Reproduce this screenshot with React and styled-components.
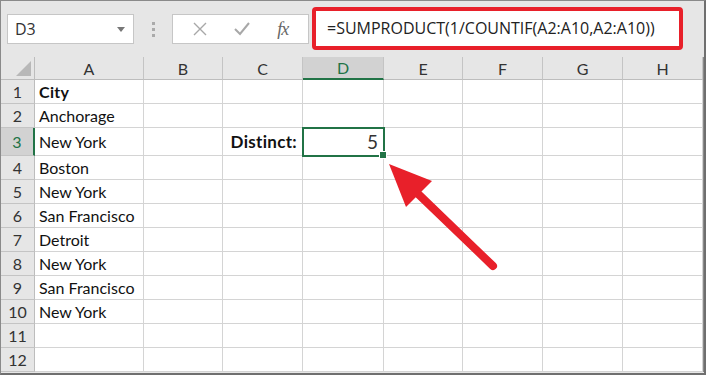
import React from "react";
import styled, { createGlobalStyle, css } from "styled-components";

const GlobalStyle = createGlobalStyle`
  html, body {
    margin: 0;
    padding: 0;
    background: #ffffff;
  }
  * {
    box-sizing: border-box;
  }
`;

const GREEN = "#217346";
const RED = "#e8202a";

const COLS = ["A", "B", "C", "D", "E", "F", "G", "H"];
const COL_WIDTHS = [34, 109, 79, 80, 81, 79, 80, 80, 80];
const ROW_HEIGHTS = [23, 24, 24, 28, 24, 24, 24, 24, 24, 24, 24, 24, 24];

const cities = [
  "Anchorage",
  "New York",
  "Boston",
  "New York",
  "San Francisco",
  "Detroit",
  "New York",
  "San Francisco",
  "New York",
];

const Frame = styled.div`
  position: relative;
  width: 706px;
  height: 375px;
  overflow: hidden;
  background: #e6e6e6;
  border: 1px solid #8a8a8a;
  border-right: 2px solid #6f6f6f;
  border-bottom: 2px solid #6f6f6f;
  font-family: Lato, "Open Sans", sans-serif;
`;

const FormulaBar = styled.div`
  height: 56px;
  display: flex;
  align-items: center;
  padding-left: 6px;
`;

const NameBox = styled.div`
  width: 127px;
  height: 30px;
  background: #fff;
  border: 1px solid #c6c6c6;
  display: flex;
  align-items: center;
  justify-content: space-between;
  padding: 0 8px 0 7px;
  font-family: "Open Sans", sans-serif;
  font-size: 16px;
  color: #333;
`;

const Caret = styled.span`
  width: 0;
  height: 0;
  border-left: 4px solid transparent;
  border-right: 4px solid transparent;
  border-top: 5px solid #777;
`;

const Grip = styled.div`
  width: 38px;
  display: flex;
  flex-direction: column;
  align-items: center;
  gap: 3px;

  span {
    width: 3px;
    height: 3px;
    background: #aaa;
  }
`;

const FnBox = styled.div`
  width: 137px;
  height: 30px;
  background: #fff;
  border: 1px solid #c6c6c6;
  display: flex;
  align-items: center;
  justify-content: space-around;
  padding: 0 6px;
`;

const Fx = styled.span`
  font-family: "Liberation Serif", serif;
  font-style: italic;
  font-size: 18px;
  color: #666;
  letter-spacing: -1px;
`;

const FormulaInput = styled.div`
  margin-left: 3px;
  margin-top: -2px;
  width: 371px;
  height: 43px;
  background: #fff;
  border: 4px solid ${RED};
  border-radius: 4px;
  display: flex;
  align-items: center;
  padding-left: 11px;
  font-family: "Open Sans", sans-serif;
  font-size: 16px;
  color: #222;
  white-space: nowrap;
`;

const Sheet = styled.div`
  display: grid;
  grid-template-columns: ${COL_WIDTHS.map((w) => `${w}px`).join(" ")} 1fr;
  grid-template-rows: ${ROW_HEIGHTS.map((h) => `${h}px`).join(" ")};
  background: #fff;
`;

const headerBase = css`
  background: #e6e6e6;
  color: #333;
  display: flex;
  align-items: center;
  justify-content: center;
  font-size: 16px;
`;

const Corner = styled.div`
  ${headerBase};
  position: relative;
  border-right: 1px solid #bdbdbd;
  border-bottom: 1px solid #bdbdbd;

  &::after {
    content: "";
    position: absolute;
    right: 3px;
    bottom: 3px;
    border-left: 15px solid transparent;
    border-bottom: 15px solid #b8b8b8;
  }
`;

const ColHead = styled.div`
  ${headerBase};
  border-right: 1px solid #c4c4c4;
  border-bottom: 1px solid #bdbdbd;
  ${(p) =>
    p.$active &&
    css`
      background: #d2d2d2;
      color: ${GREEN};
      border-bottom: 2px solid ${GREEN};
    `}
`;

const RowHead = styled.div`
  ${headerBase};
  border-right: 1px solid #bdbdbd;
  border-bottom: 1px solid #c4c4c4;
  ${(p) =>
    p.$active &&
    css`
      background: #d2d2d2;
      color: ${GREEN};
      border-right: 2px solid ${GREEN};
    `}
`;

const Filler = styled.div`
  background: #e6e6e6;
  border-left: 1px solid #8a8a8a;
`;

const Cell = styled.div`
  position: relative;
  border-right: 1px solid #d4d4d4;
  border-bottom: 1px solid #d4d4d4;
  display: flex;
  align-items: center;
  justify-content: ${(p) => (p.$right ? "flex-end" : "flex-start")};
  padding: 0 5px 0 4px;
  font-size: 16px;
  font-weight: ${(p) => (p.$bold ? 700 : 400)};
  letter-spacing: ${(p) => (p.$bold ? "0.3px" : "0")};
  color: #111;
  white-space: nowrap;
  ${(p) =>
    p.$large &&
    css`
      font-size: 17px;
    `}
  ${(p) =>
    p.$selected &&
    css`
      outline: 2px solid ${GREEN};
      outline-offset: -1px;
      z-index: 2;
      font-size: 19px;
      color: #333;
      padding-right: 5px;

      &::after {
        content: "";
        position: absolute;
        right: -4px;
        bottom: -4px;
        width: 6px;
        height: 6px;
        background: ${GREEN};
        border: 1px solid #fff;
      }
    `}
`;

const Arrow = styled.svg`
  position: absolute;
  left: 0;
  top: 0;
  pointer-events: none;
  z-index: 5;
`;

function cellContent(row, col) {
  if (col === 0) {
    if (row === 1) return { text: "City", bold: true };
    if (row >= 2 && row <= 10) return { text: cities[row - 2] };
  }
  if (row === 3 && col === 2)
    return { text: "Distinct:", bold: true, right: true, large: true };
  if (row === 3 && col === 3) return { text: "5", right: true, selected: true };
  return { text: "" };
}

export default function App() {
  const rows = ROW_HEIGHTS.length - 1;
  return (
    <>
      <GlobalStyle />
      <Frame>
        <FormulaBar>
          <NameBox>
            D3
            <Caret />
          </NameBox>
          <Grip>
            <span />
            <span />
            <span />
          </Grip>
          <FnBox>
            <svg width="14" height="14" viewBox="0 0 14 14">
              <path d="M1 1 L13 13 M13 1 L1 13" stroke="#a8a8a8" strokeWidth="1.4" fill="none" />
            </svg>
            <svg width="16" height="14" viewBox="0 0 16 14">
              <path d="M1 7 L6 12 L15 1" stroke="#a8a8a8" strokeWidth="2" fill="none" />
            </svg>
            <Fx>fx</Fx>
          </FnBox>
          <FormulaInput>=SUMPRODUCT(1/COUNTIF(A2:A10,A2:A10))</FormulaInput>
        </FormulaBar>
        <Sheet>
          <Corner />
          {COLS.map((c) => (
            <ColHead key={c} $active={c === "D"}>
              {c}
            </ColHead>
          ))}
          <Filler />
          {Array.from({ length: rows }, (_, i) => {
            const row = i + 1;
            return (
              <React.Fragment key={row}>
                <RowHead $active={row === 3}>{row}</RowHead>
                {COLS.map((c, ci) => {
                  const v = cellContent(row, ci);
                  return (
                    <Cell
                      key={c}
                      $bold={v.bold}
                      $right={v.right}
                      $large={v.large}
                      $selected={v.selected}
                    >
                      {v.text}
                    </Cell>
                  );
                })}
                <Filler />
              </React.Fragment>
            );
          })}
        </Sheet>
        <Arrow width="706" height="375" viewBox="0 0 706 375">
          <line
            x1="492"
            y1="265"
            x2="412"
            y2="188"
            stroke={RED}
            strokeWidth="8"
            strokeLinecap="round"
          />
          <polygon points="388,163 431,180 405,206" fill={RED} />
        </Arrow>
      </Frame>
    </>
  );
}
